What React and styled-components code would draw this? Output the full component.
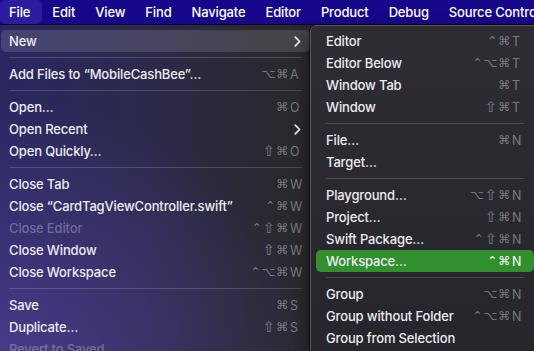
import React from 'react';
import styled, { createGlobalStyle } from 'styled-components';

const Global = createGlobalStyle`
  html, body { margin: 0; padding: 0; background: #1b1a22; overflow: hidden; }
  body { font-family: "Inter", "Noto Sans", sans-serif; -webkit-font-smoothing: antialiased; }
`;

const Screen = styled.div`
  width: 534px;
  height: 351px;
  overflow: hidden;
  display: flex;
  flex-direction: column;
`;

const MenuBar = styled.div`
  height: 24px;
  flex: none;
  display: flex;
  align-items: stretch;
  background: #17078a;
  border-bottom: 1px solid #0d0c14;
  white-space: nowrap;
`;

const BarItem = styled.div`
  display: flex;
  align-items: center;
  padding: 0 ${p => (p.$first ? 12 : 10)}px 0 ${p => (p.$first ? 9 : 10)}px;
  font-size: 13px;
  font-weight: 500;
  letter-spacing: -0.15px;
  color: #ffffff;
  border-radius: 5px;
  background: ${p => (p.$active ? '#2c1d9f' : 'transparent')};
`;

const Body = styled.div`
  flex: 1;
  display: flex;
  align-items: flex-start;
  min-height: 0;
`;

const FileMenu = styled.div`
  flex: none;
  width: 309px;
  margin-left: -4px;
  height: 100%;
  padding: 5px;
  background:
    radial-gradient(ellipse 320px 260px at 0% 100%, rgba(80, 66, 150, 0.75), rgba(80, 66, 150, 0) 100%),
    linear-gradient(to right, #2a2762 0%, #2c2a4c 45%, #2a2933 80%, #29292e 100%);
`;

const SubMenu = styled.div`
  flex: none;
  position: relative;
  z-index: 2;
  width: 218px;
  margin-left: -5px;
  height: 340px;
  padding: 4px 5px;
  background: linear-gradient(to bottom, #2e2d33 0%, #29282f 60%, #25252b 100%);
  border: 1px solid #59585f;
  border-top-left-radius: 7px;
  box-shadow: 0 0 0 1px rgba(0, 0, 0, 0.55), -4px 6px 16px rgba(0, 0, 0, 0.35);
`;

const Row = styled.div`
  height: 22px;
  display: flex;
  align-items: center;
  padding: 0 ${p => p.$pad}px;
  border-radius: 5px;
  font-size: 13px;
  font-weight: 500;
  letter-spacing: -0.15px;
  white-space: nowrap;
  color: ${p => (p.$disabled ? 'rgba(235, 235, 245, 0.32)' : '#ececf0')};
  background: ${p =>
    p.$active === 'gray' ? 'rgba(255, 255, 255, 0.13)' : p.$active === 'green' ? '#31902d' : 'transparent'};
`;

const Label = styled.span`
  flex: 1;
`;

const Shortcut = styled.span`
  display: flex;
  align-items: center;
  font-family: "Inter", "DejaVu Sans", sans-serif;
  font-size: 12.5px;
  font-weight: 400;
  color: ${p => (p.$hl ? '#ffffff' : 'rgba(235, 235, 245, 0.42)')};
`;

const Mods = styled.span`
  display: flex;
  align-items: center;
  gap: 1px;
`;

const Glyph = styled.span`
  font-family: "DejaVu Sans", sans-serif;
  font-size: ${p => (p.$big ? 15 : 12)}px;
  line-height: 1;
`;

const Key = styled.span`
  width: 12px;
  margin-left: 2px;
  text-align: left;
`;

const Separator = styled.div`
  height: 11px;
  display: flex;
  align-items: center;
  padding: 0 ${p => p.$inset}px;
  &::after {
    content: '';
    flex: 1;
    height: 1px;
    background: rgba(255, 255, 255, 0.16);
  }
`;

const Chevron = () => (
  <svg width="7" height="11" viewBox="0 0 7 11" style={{ marginRight: 1 }}>
    <path d="M1.3 1.2 L5.6 5.5 L1.3 9.8" fill="none" stroke="#f2f2f5" strokeWidth="1.7" strokeLinecap="round" strokeLinejoin="round" />
  </svg>
);

const SEP = { sep: true };

const fileItems = [
  { label: 'New', sub: true, active: 'gray' },
  SEP,
  { label: 'Add Files to “MobileCashBee”…', mods: '⌥⌘', key: 'A' },
  SEP,
  { label: 'Open…', mods: '⌘', key: 'O' },
  { label: 'Open Recent', sub: true },
  { label: 'Open Quickly…', mods: '⇧⌘', key: 'O' },
  SEP,
  { label: 'Close Tab', mods: '⌘', key: 'W' },
  { label: 'Close “CardTagViewController.swift”', mods: '⌃⌘', key: 'W' },
  { label: 'Close Editor', mods: '⌃⇧⌘', key: 'W', disabled: true },
  { label: 'Close Window', mods: '⇧⌘', key: 'W' },
  { label: 'Close Workspace', mods: '⌃⌥⌘', key: 'W' },
  SEP,
  { label: 'Save', mods: '⌘', key: 'S' },
  { label: 'Duplicate…', mods: '⇧⌘', key: 'S' },
  { label: 'Revert to Saved', disabled: true },
];

const newItems = [
  { label: 'Editor', mods: '⌃⌘', key: 'T' },
  { label: 'Editor Below', mods: '⌃⌥⌘', key: 'T' },
  { label: 'Window Tab', mods: '⌘', key: 'T' },
  { label: 'Window', mods: '⇧⌘', key: 'T' },
  SEP,
  { label: 'File…', mods: '⌘', key: 'N' },
  { label: 'Target…' },
  SEP,
  { label: 'Playground…', mods: '⌥⇧⌘', key: 'N' },
  { label: 'Project…', mods: '⇧⌘', key: 'N' },
  { label: 'Swift Package…', mods: '⌃⇧⌘', key: 'N' },
  { label: 'Workspace…', mods: '⌃⌘', key: 'N', active: 'green' },
  SEP,
  { label: 'Group', mods: '⌥⌘', key: 'N' },
  { label: 'Group without Folder', mods: '⌃⌥⌘', key: 'N' },
  { label: 'Group from Selection' },
];

const MenuItems = ({ items, pad, inset }) =>
  items.map((it, i) =>
    it.sep ? (
      <Separator key={i} $inset={inset} />
    ) : (
      <Row key={i} $pad={pad} $disabled={it.disabled} $active={it.active}>
        <Label>{it.label}</Label>
        {it.sub && <Chevron />}
        {it.key && (
          <Shortcut $hl={it.active === 'green'}>
            <Mods>
              {[...it.mods].map((g, j) => (
                <Glyph key={j} $big={g === '⇧'}>{g}</Glyph>
              ))}
            </Mods>
            <Key>{it.key}</Key>
          </Shortcut>
        )}
      </Row>
    )
  );

const barItems = ['File', 'Edit', 'View', 'Find', 'Navigate', 'Editor', 'Product', 'Debug', 'Source Control'];

export default function App() {
  return (
    <Screen>
      <Global />
      <MenuBar>
        {barItems.map((b, i) => (
          <BarItem key={b} $first={i === 0} $active={i === 0}>
            {b}
          </BarItem>
        ))}
      </MenuBar>
      <Body>
        <FileMenu>
          <MenuItems items={fileItems} pad={8} inset={8} />
        </FileMenu>
        <SubMenu>
          <MenuItems items={newItems} pad={10} inset={10} />
        </SubMenu>
      </Body>
    </Screen>
  );
}
